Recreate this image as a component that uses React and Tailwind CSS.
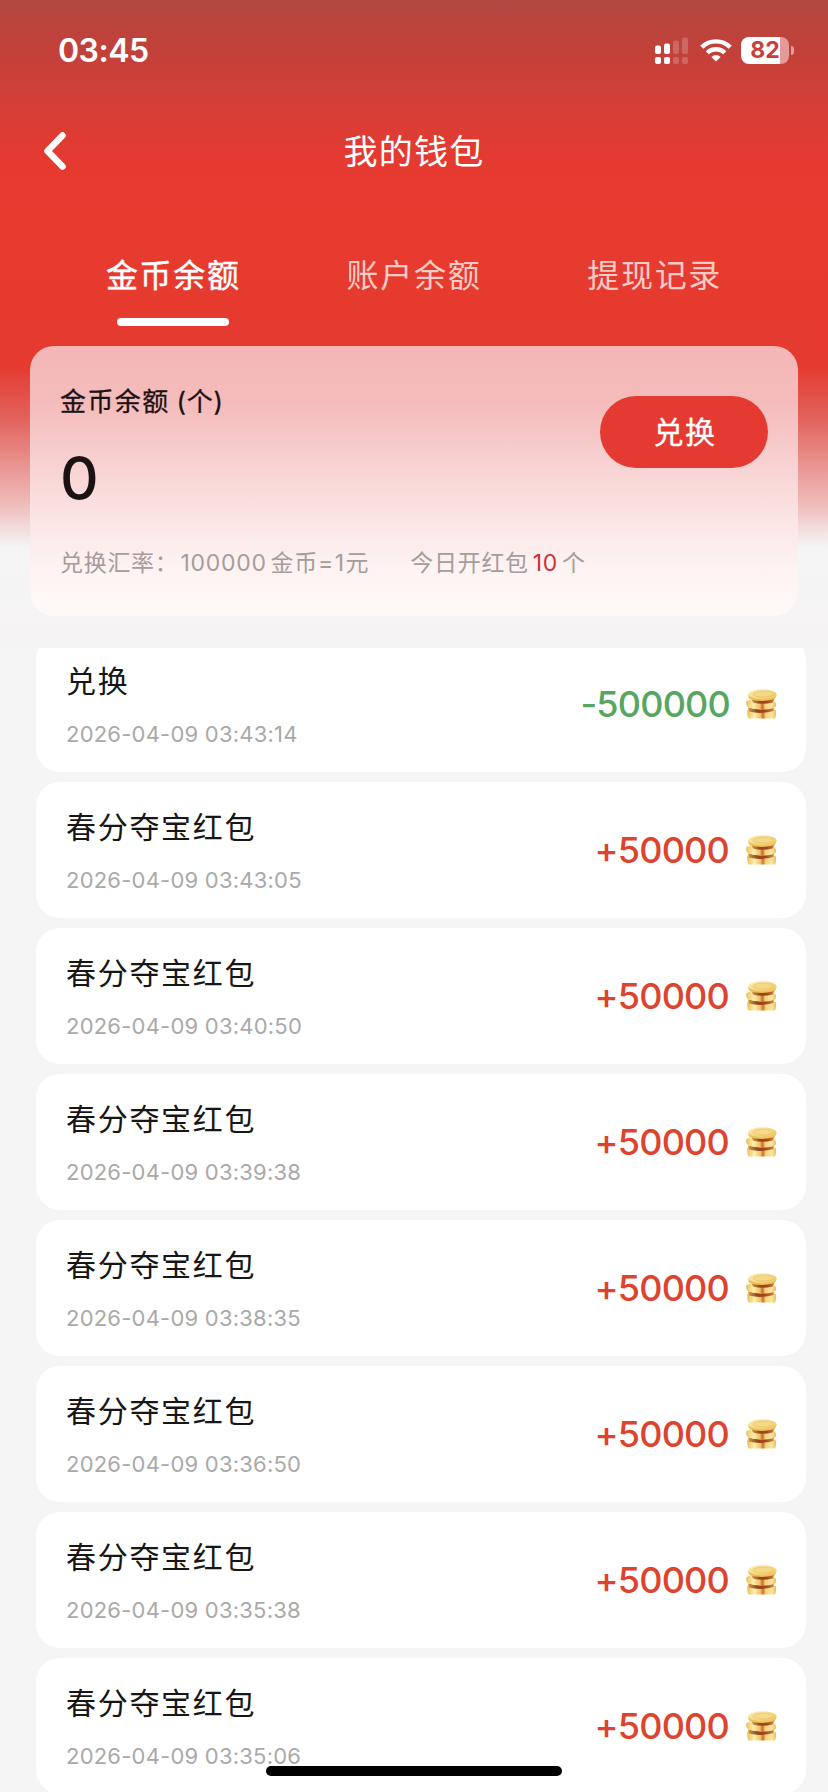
const records = [
  { id: 1, title: "兑换", time: "2026-04-09 03:43:14", amount: -500000 },
  { id: 2, title: "春分夺宝红包", time: "2026-04-09 03:43:05", amount: 50000 },
  { id: 3, title: "春分夺宝红包", time: "2026-04-09 03:40:50", amount: 50000 },
  { id: 4, title: "春分夺宝红包", time: "2026-04-09 03:39:38", amount: 50000 },
  { id: 5, title: "春分夺宝红包", time: "2026-04-09 03:38:35", amount: 50000 },
  { id: 6, title: "春分夺宝红包", time: "2026-04-09 03:36:50", amount: 50000 },
  { id: 7, title: "春分夺宝红包", time: "2026-04-09 03:35:38", amount: 50000 },
  { id: 8, title: "春分夺宝红包", time: "2026-04-09 03:35:06", amount: 50000 },
];

const tabs = ["金币余额", "账户余额", "提现记录"];

const SignalIcon = () => (
  <svg width="33" height="27" viewBox="0 0 33 27" fill="#fff">
    <rect x="0" y="8.5" width="6" height="8.5" rx="2" />
    <rect x="9" y="6.5" width="6" height="10.5" rx="2" />
    <rect x="0" y="20" width="6" height="7" rx="2" />
    <rect x="9" y="20" width="6" height="7" rx="2" />
    <g opacity="0.2">
      <rect x="18" y="3.5" width="6" height="13.5" rx="2" />
      <rect x="27" y="0.5" width="6" height="16.5" rx="2" />
      <rect x="18" y="20" width="6" height="7" rx="2" />
      <rect x="27" y="20" width="6" height="7" rx="2" />
    </g>
  </svg>
);

const WifiIcon = () => (
  <svg width="32" height="24" viewBox="0 0 32 24" fill="none" stroke="#fff" strokeWidth="4.4">
    <path d="M1.8 9.2a20.2 20.2 0 0 1 28.4 0" />
    <path d="M7.2 14.8a12.6 12.6 0 0 1 17.6 0" />
    <path d="M16 23.6l-4.6-4.7a6.6 6.6 0 0 1 9.2 0z" fill="#fff" stroke="none" />
  </svg>
);

const CoinIcon = () => (
  <svg width="32" height="30" viewBox="0 0 32 30">
    <defs>
      <linearGradient id="coinSide" x1="0" x2="1" y1="0" y2="0">
        <stop offset="0" stopColor="#e9bf5a" />
        <stop offset="0.25" stopColor="#fdeeb0" />
        <stop offset="0.46" stopColor="#f0bf62" />
        <stop offset="0.55" stopColor="#c8702f" />
        <stop offset="0.64" stopColor="#f5d47a" />
        <stop offset="0.85" stopColor="#fae6a0" />
        <stop offset="1" stopColor="#e8bd58" />
      </linearGradient>
      <linearGradient id="coinTop" x1="0" x2="1" y1="0" y2="1">
        <stop offset="0" stopColor="#fdf0b8" />
        <stop offset="1" stopColor="#efc45a" />
      </linearGradient>
      <linearGradient id="coinShade" x1="0" x2="1" y1="0" y2="0">
        <stop offset="0" stopColor="#d79a45" />
        <stop offset="0.35" stopColor="#8f4a1c" />
        <stop offset="0.65" stopColor="#a83f1c" />
        <stop offset="1" stopColor="#c98a3c" />
      </linearGradient>
    </defs>
    {/* bottom coin */}
    <path d="M2.500 20.500Q16 25 30.500 20.500Q32 25 30 29.500H3.500Q1.500 25 2.500 20.500z" fill="url(#coinSide)" />
    <path d="M3 18.500Q16 22 29 18.500L28.500 22Q16 25.500 4 22.500z" fill="url(#coinShade)" />
    {/* middle coin */}
    <path d="M1.500 12Q6 9.500 17 9.500Q30 10 31 14.500Q31.500 17.500 29.500 19Q16 22.500 3 18.500Q0 15 1.500 12z" fill="url(#coinSide)" />
    <path d="M6.500 10Q17 12 30 9L27.500 13.500Q17 16 8 13.500z" fill="url(#coinShade)" />
    {/* top coin */}
    <path d="M3.500 5.500Q2.500 8.500 5 10.200Q16 13.800 29 10.200Q31.800 8 31.300 5z" fill="#ecc15a" />
    <ellipse cx="17.500" cy="5.300" rx="14" ry="5" fill="url(#coinTop)" />
    <ellipse cx="18" cy="5.100" rx="10" ry="2.900" fill="#f6d987" stroke="#e8bf60" strokeWidth="0.600" />
  </svg>
);

const StatusBar = () => (
  <div className="flex h-[100px] items-center justify-between pr-[34px] pl-[58px]">
    <span className="pt-px text-[32px] leading-none font-semibold tracking-[-0.5px]">03:45</span>
    <div className="flex items-center">
      <SignalIcon />
      <div className="ml-3">
        <WifiIcon />
      </div>
      <div className="ml-[9px] flex h-[27px] w-12 items-center justify-center rounded-[8px] bg-[linear-gradient(90deg,#fff_39px,#e39a98_39px)] pt-px text-[23px] leading-none font-bold text-[#c4403b]">
        82
      </div>
      <div className="ml-0.5 h-[9px] w-[3px] rounded-r-full bg-white/50" />
    </div>
  </div>
);

const RecordRow = ({ record }) => {
  const income = record.amount > 0;

  return (
    <li className="flex h-[136px] shrink-0 items-center justify-between rounded-[24px] bg-white pr-[29px] pl-[30px]">
      <div>
        <p className="-mt-px text-[30px] leading-[42px] tracking-[1.7px] text-[#161616]">{record.title}</p>
        <p className="mt-[19px] text-[22px] leading-[26px] tracking-[0.22px] text-[#a9a9a9]">{record.time}</p>
      </div>
      <div className="flex items-center gap-4">
        <span
          className={
            income
              ? "text-[36px] leading-none font-medium tracking-[-0.8px] text-[#dc4430]"
              : "-mr-px text-[36px] leading-none font-medium tracking-[-0.8px] text-[#56a662]"
          }
        >
          {income ? `+${record.amount}` : record.amount}
        </span>
        <CoinIcon />
      </div>
    </li>
  );
};

const App = () => {
  return (
    <div className="relative flex h-[1792px] w-[828px] flex-col overflow-hidden bg-[#f5f5f5] font-['Inter','Noto_Sans_CJK_SC',sans-serif]">

      {/* Header */}
      <header className="h-[648px] shrink-0 bg-[linear-gradient(180deg,#b24841_0px,#c2413a_50px,#d63e36_110px,#e53a31_160px,#e83a30_195px,#e53a2f_365px,#e2645e_420px,#e99490_465px,#efc0be_508px,#f3e4e4_534px,#f5f5f5_548px,#f6f3f4_648px)] text-white">
        <StatusBar />

        {/* Nav */}
        <div className="grid h-[102px] grid-cols-3 items-center px-10">
          <svg width="30" height="42" viewBox="0 0 30 42" fill="none" stroke="#fff" strokeWidth="6.5" strokeLinecap="round" strokeLinejoin="round">
            <path d="M22.500 5.500L7.500 21l15 15.500" />
          </svg>
          <h1 className="pt-0.5 text-center text-[34px] leading-none tracking-[1.3px]">我的钱包</h1>
        </div>

        {/* Tabs */}
        <nav className="mt-[50px] grid grid-cols-3 px-[53px]">
          {tabs.map((tab, i) => (
            <div key={tab} className="flex flex-col items-center">
              <span
                className={
                  i === 0
                    ? "text-[32px] leading-[48px] tracking-[1.7px] [-webkit-text-stroke:0.4px_#fff]"
                    : "text-[32px] leading-[48px] tracking-[1.7px] text-[#fbcbc5]"
                }
              >
                {tab}
              </span>
              {i === 0 && <div className="mt-[18px] h-2 w-28 rounded-full bg-white" />}
            </div>
          ))}
        </nav>

        {/* Balance card */}
        <section className="mx-[30px] mt-5 h-[270px] rounded-[24px] bg-[linear-gradient(180deg,#f4b6b6_0%,#f5bcbc_22%,#f8d3d3_45%,#fce6e6_66%,#fdf3f2_82%,#fef9f7_100%)] px-[30px] pt-9">
          <div className="flex justify-between">
            <div className="text-[#1d1213]">
              <p className="text-[26px] leading-10 tracking-[1.4px] [-webkit-text-stroke:0.3px_#1d1213]">
                金币余额<span className="ml-[7px] tracking-[0.7px]">(个)</span>
              </p>
              <p className="mt-5 text-[60px] leading-[72px] font-medium">0</p>
            </div>
            <button className="mt-3.5 h-[72px] w-[168px] rounded-[36px] bg-[#e53a32] pl-0.5 text-[30px] tracking-[1.5px] text-white [-webkit-text-stroke:0.3px_#fff]">
              兑换
            </button>
          </div>
          <p className="mt-[33px] flex text-[23px] leading-8 tracking-[0.7px] text-[#a69c9c]">
            <span>兑换汇率：</span>
            <span className="mr-1 ml-0.5">100000</span>
            <span>金币</span>
            <span className="tracking-[1.5px]">=1</span>
            <span>元</span>
            <span className="ml-[41px]">今日开红包</span>
            <span className="mx-1 text-[#d1302f]">10</span>
            <span>个</span>
          </p>
        </section>
      </header>

      {/* Records, scrolled a little under the header */}
      <div className="flex-1 overflow-hidden pr-[22px] pl-9">
        <ul className="-mt-3 flex flex-col gap-2.5">
          {records.map((record) => (
            <RecordRow key={record.id} record={record} />
          ))}
        </ul>
      </div>

      {/* Home indicator */}
      <div className="absolute bottom-4 left-[266px] h-2.5 w-[296px] rounded-full bg-black" />
    </div>
  );
};

export default App;
